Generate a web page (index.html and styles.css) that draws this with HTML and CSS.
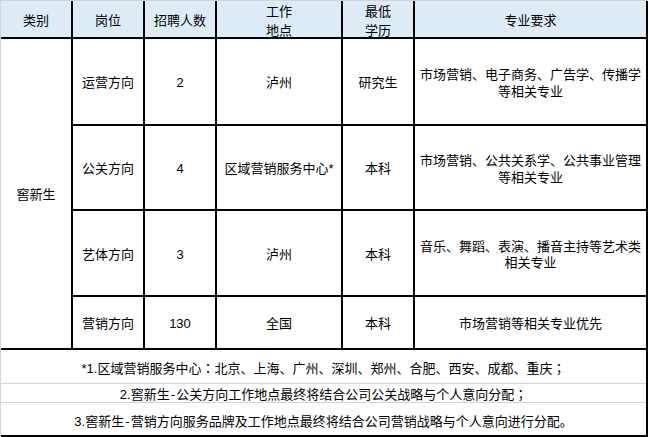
FILE: index.html
```html
<!DOCTYPE html>
<html lang="zh-CN">
<head>
<meta charset="utf-8">
<title>招聘岗位</title>
<link rel="stylesheet" href="styles.css">
</head>
<body>
<div class="sheet">
  <div class="grid">
    <div class="cell head">类别</div>
    <div class="cell head">岗位</div>
    <div class="cell head">招聘人数</div>
    <div class="cell head">工作<br>地点</div>
    <div class="cell head">最低<br>学历</div>
    <div class="cell head">专业要求</div>

    <div class="cell cat">窖新生</div>

    <div class="cell">运营方向</div>
    <div class="cell">2</div>
    <div class="cell">泸州</div>
    <div class="cell">研究生</div>
    <div class="cell">市场营销、电子商务、广告学、传播学<br>等相关专业</div>

    <div class="cell">公关方向</div>
    <div class="cell">4</div>
    <div class="cell">区域营销服务中心*</div>
    <div class="cell">本科</div>
    <div class="cell">市场营销、公共关系学、公共事业管理<br>等相关专业</div>

    <div class="cell">艺体方向</div>
    <div class="cell">3</div>
    <div class="cell">泸州</div>
    <div class="cell">本科</div>
    <div class="cell">音乐、舞蹈、表演、播音主持等艺术类<br>相关专业</div>

    <div class="cell">营销方向</div>
    <div class="cell">130</div>
    <div class="cell">全国</div>
    <div class="cell">本科</div>
    <div class="cell">市场营销等相关专业优先</div>
  </div>
  <div class="notes">
    <div class="note note-first">*1.区域营销服务中心<span class="punct">：</span>北京、上海、广州、深圳、郑州、合肥、西安、成都、重庆<span class="punct">；</span></div>
    <div class="note note-second">2.窖新生<span class="dash">-</span>公关方向工作地点最终将结合公司公关战略与个人意向分配<span class="punct">；</span></div>
    <div class="note note-third">3.窖新生<span class="dash">-</span>营销方向服务品牌及工作地点最终将结合公司营销战略与个人意向进行分配。</div>
  </div>
</div>
</body>
</html>
```

FILE: styles.css
```css
html, body {
  margin: 0;
  padding: 0;
  background: #ffffff;
}

.sheet {
  width: 648px;
  box-sizing: border-box;
  border-top: 1px solid #d4d4d4;
  border-left: 1px solid #d4d4d4;
  font-family: "Liberation Sans", "Noto Sans CJK SC", sans-serif;
  font-size: 13px;
  color: #000000;
}

.grid {
  display: grid;
  grid-template-columns: 70px 70px 70px 124px 70px 231px;
  grid-template-rows: 36px 85px 83px 84px 51px;
  gap: 2px;
  padding: 0 2px 2px 0;
  background: #000000;
  width: 647px;
  box-sizing: border-box;
}

.cell {
  background: #ffffff;
  display: flex;
  align-items: center;
  justify-content: center;
  text-align: center;
  line-height: 16.5px;
  padding-top: 4px;
  box-sizing: border-box;
  white-space: nowrap;
}

.head {
  background: #ddebf7;
  line-height: 19px;
  padding-top: 3px;
}

.cat {
  grid-row: 2 / 6;
  grid-column: 1;
}

.notes {
  width: 647px;
  box-sizing: border-box;
  border-right: 2px solid #000000;
  border-bottom: 2px solid #000000;
}

.note {
  display: flex;
  align-items: center;
  justify-content: center;
  white-space: pre;
  box-sizing: border-box;
}

.punct {
  font-family: "Noto Sans CJK TC", "Noto Sans CJK SC", sans-serif;
}

.dash {
  font-family: "Noto Sans CJK SC", sans-serif;
  padding: 0 1px;
}

.note-first {
  height: 34px;
  padding-top: 2px;
  border-bottom: 1px solid #d4d4d4;
}

.note-second {
  height: 19px;
  padding-top: 1px;
  border-bottom: 1px solid #d4d4d4;
}

.note-third {
  height: 32px;
  padding-top: 2px;
}
```
